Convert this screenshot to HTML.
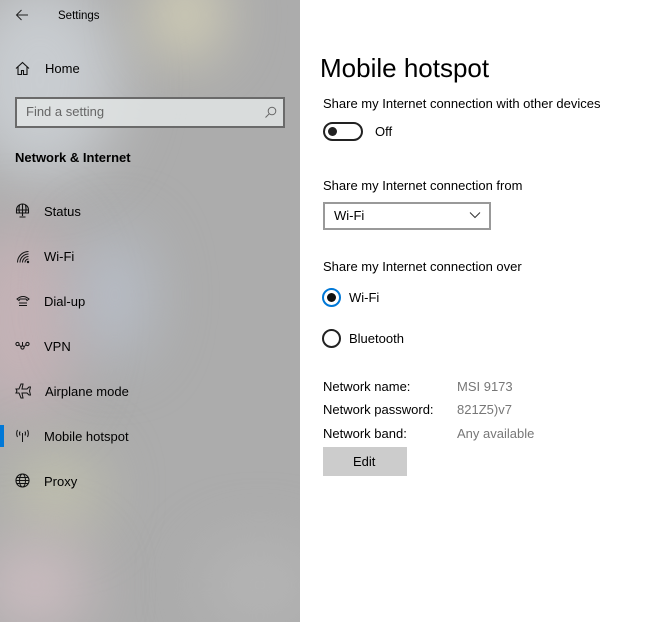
<!DOCTYPE html>
<html><head><meta charset="utf-8"><style>
*{margin:0;padding:0;box-sizing:border-box}
body{width:667px;height:622px;overflow:hidden;font-family:"Liberation Sans",sans-serif;color:#000;background:#fff;position:relative}
#side{position:absolute;left:0;top:0;width:300px;height:622px;background:#acacac;overflow:hidden}
.blob{position:absolute;border-radius:50%;filter:blur(30px)}
.t{position:absolute;white-space:nowrap;font-size:13px;line-height:16px}
.ic{position:absolute}
</style></head><body>
<div id="side">
 <div class="blob" style="left:-40px;top:-20px;width:160px;height:200px;background:#c8ccd0"></div>
 <div class="blob" style="left:150px;top:-30px;width:70px;height:90px;background:#d6d2b6"></div>
 <div class="blob" style="left:-40px;top:220px;width:120px;height:200px;background:#c4b2b6"></div>
 <div class="blob" style="left:80px;top:230px;width:70px;height:130px;background:#b8bec8"></div>
 <div class="blob" style="left:10px;top:450px;width:90px;height:80px;background:#c2c2ae"></div>
 <div class="blob" style="left:-20px;top:540px;width:110px;height:90px;background:#cbbcc0"></div>
 <div class="blob" style="left:200px;top:540px;width:120px;height:90px;background:#b4b4b4"></div>
 <svg class="ic" style="left:15px;top:8px" width="14" height="14" viewBox="0 0 14 14"><path d="M13 7H1.5M6.5 2L1.5 7l5 5" stroke="#222" stroke-width="1" fill="none"/></svg>
 <div class="t" style="left:58px;top:8px;font-size:11.5px">Settings</div>
 <svg class="ic" style="left:15px;top:61px" width="15" height="15" viewBox="0 0 15 15"><path d="M1 7.5L7.5 1.5l6.5 6M3 6v7.5h3.5v-4h2v4H12V6" stroke="#111" stroke-width="1.1" fill="none"/></svg>
 <div class="t" style="left:45px;top:61px">Home</div>
 <div style="position:absolute;left:15px;top:97px;width:270px;height:31px;border:2px solid #6a6a6a;background:rgba(225,228,228,.85)"></div>
 <div class="t" style="left:26px;top:104px;color:#666">Find a setting</div>
 <svg class="ic" style="left:264px;top:106px" width="13" height="13" viewBox="0 0 13 13"><circle cx="8" cy="5" r="3.8" stroke="#666" fill="none"/><path d="M5.2 7.8L1.5 11.5" stroke="#666"/></svg>
 <div class="t" style="left:15px;top:150px;font-weight:bold">Network &amp; Internet</div>
 <svg class="ic" style="left:15px;top:203px" width="15" height="16" viewBox="0 0 15 16"><path d="M1.5 7a6 6 0 0112 0v3h-12z M1.5 7h12 M7.5 1v9 M4.5 2Q3.5 6 4.5 10 M10.5 2Q11.5 6 10.5 10 M7.5 10v3 M4.5 14h6" stroke="#111" stroke-width="1.1" fill="none"/></svg>
 <div class="t" style="left:44px;top:204px">Status</div>
 <svg class="ic" style="left:16px;top:250px" width="14" height="14" viewBox="0 0 14 14"><path d="M1.5 12.5A11 11 0 0112.5 1.5M4 12.5A8.5 8.5 0 0112.5 4M6.5 12.5a6 6 0 016-6M9 12.5a3.5 3.5 0 013.5-3.5" stroke="#111" fill="none"/><circle cx="12" cy="12" r="1.2" fill="#111"/></svg>
 <div class="t" style="left:44px;top:249px">Wi-Fi</div>
 <svg class="ic" style="left:16px;top:294px" width="14" height="14" viewBox="0 0 14 14"><path d="M1 5Q7 0 13 5l-2 1.5-1-1.5H4L3 6.5z M3 9h8M3 11.5h8" stroke="#111" fill="none" stroke-width="1"/></svg>
 <div class="t" style="left:44px;top:294px">Dial-up</div>
 <svg class="ic" style="left:15px;top:341px" width="15" height="10" viewBox="0 0 15 10"><circle cx="2.5" cy="3" r="1.6" stroke="#111" fill="none"/><circle cx="7.5" cy="6.5" r="1.6" stroke="#111" fill="none"/><circle cx="12.5" cy="3" r="1.6" stroke="#111" fill="none"/><path d="M4 3.5L6 6M9 6l2-2.5M7.5 1v4" stroke="#111" fill="none"/></svg>
 <div class="t" style="left:44px;top:339px">VPN</div>
 <svg class="ic" style="left:15px;top:383px" width="16" height="16" viewBox="0 0 16 16"><path d="M1 6h3l2-5h2l-1 5h5l2-2h1.5l-1 4 1 4H14l-2-2H7l1 5H6l-2-5H1l1-2z" stroke="#111" fill="none" stroke-width="1"/></svg>
 <div class="t" style="left:45px;top:384px">Airplane mode</div>
 <div style="position:absolute;left:0;top:425px;width:4px;height:22px;background:#0078d7"></div>
 <svg class="ic" style="left:15px;top:429px" width="15" height="13" viewBox="0 0 15 13"><path d="M7.5 4v9M5 2.5Q4 4.5 5 6.5M10 2.5Q11 4.5 10 6.5M2.5 1Q.8 4.5 2.5 8M12.5 1q1.7 3.5 0 7" stroke="#111" fill="none"/></svg>
 <div class="t" style="left:44px;top:429px">Mobile hotspot</div>
 <svg class="ic" style="left:15px;top:473px" width="15" height="15" viewBox="0 0 15 15"><circle cx="7.5" cy="7.5" r="6.5" stroke="#111" fill="none" stroke-width="1.1"/><ellipse cx="7.5" cy="7.5" rx="3" ry="6.5" stroke="#111" fill="none"/><path d="M1 7.5h13M2 4.5h11M2 10.5h11" stroke="#111"/></svg>
 <div class="t" style="left:44px;top:474px">Proxy</div>
</div>

<div class="t" style="left:320px;top:52px;font-size:26px;line-height:32px">Mobile hotspot</div>
<div class="t" style="left:323px;top:96px">Share my Internet connection with other devices</div>
<div style="position:absolute;left:323px;top:122px;width:40px;height:19px;border:2px solid #222;border-radius:10px"></div>
<div style="position:absolute;left:328px;top:127px;width:9px;height:9px;border-radius:50%;background:#222"></div>
<div class="t" style="left:375px;top:124px">Off</div>
<div class="t" style="left:323px;top:178px">Share my Internet connection from</div>
<div style="position:absolute;left:323px;top:202px;width:168px;height:28px;border:2px solid #999"></div>
<div class="t" style="left:334px;top:208px">Wi-Fi</div>
<svg class="ic" style="left:469px;top:211px" width="12" height="8" viewBox="0 0 12 8"><path d="M1 1.5l5 5 5-5" stroke="#333" fill="none"/></svg>
<div class="t" style="left:323px;top:259px">Share my Internet connection over</div>
<div style="position:absolute;left:322px;top:288px;width:19px;height:19px;border:2px solid #0078d7;border-radius:50%"></div>
<div style="position:absolute;left:327px;top:293px;width:9px;height:9px;border-radius:50%;background:#111"></div>
<div class="t" style="left:349px;top:290px">Wi-Fi</div>
<div style="position:absolute;left:322px;top:329px;width:19px;height:19px;border:2px solid #222;border-radius:50%"></div>
<div class="t" style="left:349px;top:331px">Bluetooth</div>
<div class="t" style="left:323px;top:379px">Network name:</div>
<div class="t" style="left:457px;top:379px;color:#777">MSI 9173</div>
<div class="t" style="left:323px;top:402px">Network password:</div>
<div class="t" style="left:457px;top:402px;color:#777">821Z5)v7</div>
<div class="t" style="left:323px;top:426px">Network band:</div>
<div class="t" style="left:457px;top:426px;color:#777">Any available</div>
<div style="position:absolute;left:323px;top:447px;width:84px;height:29px;background:#ccc"></div>
<div class="t" style="left:353px;top:454px">Edit</div>
</body></html>
